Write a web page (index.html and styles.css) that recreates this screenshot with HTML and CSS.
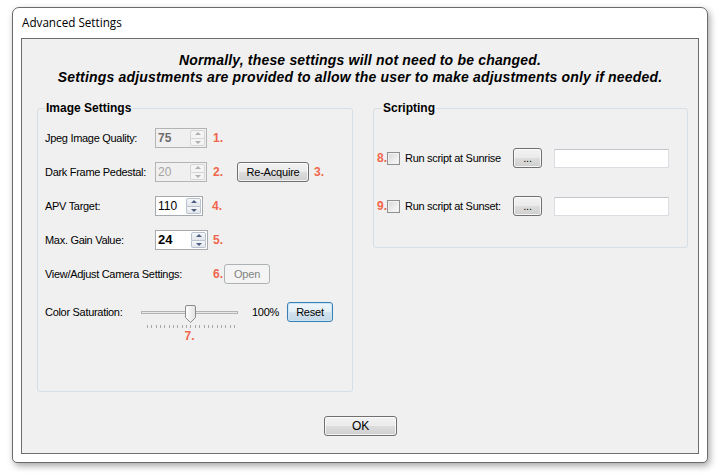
FILE: index.html
```html
<!DOCTYPE html>
<html>
<head>
<meta charset="utf-8">
<title>Advanced Settings</title>
<link rel="stylesheet" href="styles.css">
</head>
<body>
<div class="window">
  <div class="titlebar">Advanced Settings</div>
  <div class="client">
    <div class="notice">
      <p>Normally, these settings will not need to be changed.</p>
      <p>Settings adjustments are provided to allow the user to make adjustments only if needed.</p>
    </div>
    <div class="groups">
      <fieldset class="group group-image">
        <legend>Image Settings</legend>
        <div class="rows">
          <div class="row">
            <span class="label w110">Jpeg Image Quality:</span>
            <span class="spin disabled w52"><span class="val strong-gray">75</span><span class="spin-btns"><span class="sb up"></span><span class="sb down"></span></span></span>
            <span class="mark m6">1.</span>
          </div>
          <div class="row">
            <span class="label w110">Dark Frame Pedestal:</span>
            <span class="spin disabled w52"><span class="val dim">20</span><span class="spin-btns"><span class="sb up"></span><span class="sb down"></span></span></span>
            <span class="mark m6 w12">2.</span>
            <button class="btn reacq">Re-Acquire</button>
            <span class="mark m5">3.</span>
          </div>
          <div class="row">
            <span class="label w110">APV Target:</span>
            <span class="spin w48"><span class="val">110</span><span class="spin-btns"><span class="sb up"></span><span class="sb down"></span></span></span>
            <span class="mark m9">4.</span>
          </div>
          <div class="row">
            <span class="label w110">Max. Gain Value:</span>
            <span class="spin w53"><span class="val bold">24</span><span class="spin-btns"><span class="sb up"></span><span class="sb down"></span></span></span>
            <span class="mark m5">5.</span>
          </div>
          <div class="row">
            <span class="label w168">View/Adjust Camera Settings:</span>
            <span class="mark w11">6.</span>
            <button class="btn btn-disabled open" disabled>Open</button>
          </div>
          <div class="row row-slider">
            <span class="label w96 lh20">Color Saturation:</span>
            <div class="slider">
              <svg width="97" height="28" viewBox="0 0 97 28">
                <defs>
                  <linearGradient id="thumbg" x1="0" y1="0" x2="1" y2="0">
                    <stop offset="0" stop-color="#ffffff"/>
                    <stop offset="1" stop-color="#e2e2e2"/>
                  </linearGradient>
                </defs>
                <rect x="0.5" y="9.5" width="96" height="2" fill="#e9e9e9" stroke="#b4b4b4"/>
                <path d="M6.5 23V26M10.5 23V26M15.5 23V26M19.5 23V26M23.5 23V26M28.5 23V26M32.5 23V26M36.5 23V26M41.5 23V26M45.5 23V26M49.5 23V26M54.5 23V26M58.5 23V26M63.5 23V26M67.5 23V26M71.5 23V26M76.5 23V26M80.5 23V26M84.5 23V26M89.5 23V26M93.5 23V26" stroke="#a8a8a8" stroke-width="1"/>
                <path d="M44.5 5 Q44.5 3.5 46 3.5 H53 Q54.5 3.5 54.5 5 V15.5 L49.5 20.5 L44.5 15.5 Z" fill="url(#thumbg)" stroke="#8a8a8a"/>
              </svg>
              <span class="mark slider-mark">7.</span>
            </div>
            <span class="pct lh20">100%</span>
            <button class="btn btn-focus reset">Reset</button>
          </div>
        </div>
      </fieldset>
      <fieldset class="group group-script">
        <legend>Scripting</legend>
        <div class="srows">
          <div class="row">
            <span class="mark w10">8.</span>
            <span class="check"></span>
            <span class="label slabel">Run script at Sunrise</span>
            <button class="btn dots">...</button>
            <span class="textbox"></span>
          </div>
          <div class="row">
            <span class="mark w10">9.</span>
            <span class="check"></span>
            <span class="label slabel">Run script at Sunset:</span>
            <button class="btn dots">...</button>
            <span class="textbox"></span>
          </div>
        </div>
      </fieldset>
    </div>
    <div class="footer">
      <button class="btn ok">OK</button>
    </div>
  </div>
</div>
</body>
</html>
```
FILE: styles.css
```css
html, body {
  margin: 0;
  padding: 0;
  background: #ffffff;
}

body {
  width: 724px;
  height: 473px;
  overflow: hidden;
  font-family: "Liberation Sans", Arial, sans-serif;
  font-size: 11px;
  color: #000;
}

.window {
  margin: 7px 0 0 12px;
  width: 696px;
  height: 456px;
  box-sizing: border-box;
  border: 1px solid #6a6a6a;
  border-radius: 7px 7px 5px 5px;
  background: #ffffff;
  box-shadow: 2px 3px 7px rgba(0, 0, 0, 0.35);
  padding: 0 8px 8px 8px;
}

.titlebar {
  height: 30px;
  line-height: 28px;
  padding-left: 1px;
  font-family: "Open Sans", "Noto Sans", sans-serif;
  font-size: 11.7px;
  color: #000;
}

.client {
  height: 416px;
  box-sizing: border-box;
  border: 1px solid #6e6e6e;
  background: #f0f0f0;
}

.notice {
  padding-top: 13px;
  text-align: center;
  font-weight: bold;
  font-style: italic;
  font-size: 14px;
  letter-spacing: 0.18px;
  line-height: 17px;
}

.notice p {
  margin: 0;
}

.groups {
  display: flex;
  align-items: flex-start;
  margin-top: 15px;
}

.group {
  margin: 0;
  min-width: 0;
  box-sizing: border-box;
  border: 1px solid #d5dfe5;
  border-radius: 3px;
  padding: 0;
}

.group legend {
  font-weight: bold;
  font-size: 12px;
  line-height: 14px;
  padding: 0 1px;
  color: #000;
}

.group-image {
  margin-left: 15px;
  width: 316px;
  height: 291px;
  padding-left: 7px;
}

.group-script {
  margin-left: 20px;
  width: 315px;
  height: 147px;
  padding-left: 3px;
}

.group-script legend {
  margin-left: 5px;
}

.rows {
  display: flex;
  flex-direction: column;
  gap: 14px;
  padding-top: 13px;
}

.row {
  display: flex;
  align-items: center;
  height: 20px;
}

.row-slider {
  align-items: flex-start;
  margin-top: 4px;
}

.label {
  letter-spacing: -0.3px;
  white-space: nowrap;
}

.lh20 {
  line-height: 20px;
}

.w110 { width: 110px; flex: none; }
.w168 { width: 168px; flex: none; }
.w96 { width: 96px; flex: none; }
.w12 { width: 12px; flex: none; }
.w11 { width: 11px; flex: none; }
.w10 { width: 10px; flex: none; }

.mark {
  color: #f1664c;
  font-size: 12px;
  font-weight: bold;
}

.m5 { margin-left: 5px; }
.m6 { margin-left: 6px; }
.m9 { margin-left: 9px; }

.spin {
  display: flex;
  align-items: stretch;
  justify-content: space-between;
  height: 20px;
  box-sizing: border-box;
  border: 1px solid #a6a9ae;
  background: #ffffff;
  flex: none;
}

.spin.disabled {
  border-color: #b4b4b4;
  background: #f0f0f0;
}

.w52 { width: 52px; }
.w48 { width: 48px; }
.w53 { width: 53px; }

.val {
  font-size: 12px;
  line-height: 18px;
  padding-left: 2px;
}

.val.bold {
  font-weight: bold;
  font-size: 13px;
}

.val.strong-gray {
  font-weight: bold;
  color: #6d6d6d;
}

.val.dim {
  color: #a3a3a3;
}

.spin-btns {
  display: flex;
  flex-direction: column;
  width: 15px;
  margin: 1px 1px 1px 0;
}

.sb {
  flex: 1;
  position: relative;
  box-sizing: border-box;
  border: 1px solid #b9c3d0;
  background: linear-gradient(#f6f7f9, #e1e5ea);
}

.sb.up {
  border-radius: 2px 2px 0 0;
}

.sb.down {
  border-top: none;
  border-radius: 0 0 2px 2px;
}

.sb::after {
  content: "";
  position: absolute;
  left: 50%;
  top: 50%;
  margin-left: -3px;
  border-left: 3px solid transparent;
  border-right: 3px solid transparent;
}

.sb.up::after {
  margin-top: -2px;
  border-bottom: 3px solid #4b5e83;
}

.sb.down::after {
  margin-top: -1px;
  border-top: 3px solid #4b5e83;
}

.spin.disabled .sb {
  border-color: #d6d6d6;
  background: #f4f4f4;
}

.spin.disabled .sb.up::after {
  border-bottom-color: #b0b0b0;
}

.spin.disabled .sb.down::after {
  border-top-color: #b0b0b0;
}

.btn {
  font-family: "Liberation Sans", Arial, sans-serif;
  font-size: 11px;
  letter-spacing: -0.2px;
  color: #000;
  height: 20px;
  box-sizing: border-box;
  padding: 0;
  border: 1px solid #707070;
  border-radius: 3px;
  background: linear-gradient(#f2f2f2 0%, #ebebeb 50%, #dddddd 50%, #cfcfcf 100%);
  box-shadow: inset 0 0 0 1px rgba(255, 255, 255, 0.75);
  flex: none;
}

.btn-disabled {
  border-color: #adb2b5;
  background: #f4f4f4;
  color: #838383;
  box-shadow: none;
}

.btn-focus {
  border-color: #3c7fb1;
  background: linear-gradient(#eef6fb 0%, #e2eef6 50%, #d2e2ee 50%, #c4d8e6 100%);
  box-shadow: inset 0 0 0 1px #c8e6f9;
}

.reacq {
  width: 72px;
  margin-left: 12px;
}

.open {
  width: 46px;
}

.slider {
  width: 97px;
  flex: none;
  display: flex;
  flex-direction: column;
  align-items: center;
}

.slider svg {
  display: block;
}

.slider-mark {
  line-height: 12px;
}

.pct {
  width: 35px;
  margin-left: 14px;
  letter-spacing: -0.3px;
  flex: none;
}

.reset {
  width: 46px;
}

.srows {
  display: flex;
  flex-direction: column;
  gap: 28px;
  padding-top: 33px;
}

.check {
  width: 13px;
  height: 13px;
  box-sizing: border-box;
  border: 1px solid #8e8f8f;
  background: linear-gradient(135deg, #d9d9d9, #fbfbfb);
  box-shadow: inset 0 0 0 1px #f2f2f2;
  flex: none;
}

.slabel {
  width: 108px;
  margin-left: 5px;
  flex: none;
}

.dots {
  width: 29px;
  line-height: 14px;
}

.textbox {
  width: 115px;
  height: 19px;
  margin-left: 12px;
  box-sizing: border-box;
  border: 1px solid #dadde2;
  border-top-color: #c3c7cd;
  background: #ffffff;
  flex: none;
}

.footer {
  display: flex;
  justify-content: center;
  margin-top: 24px;
}

.ok {
  width: 73px;
  font-size: 12px;
  margin-left: 1px;
}
```
